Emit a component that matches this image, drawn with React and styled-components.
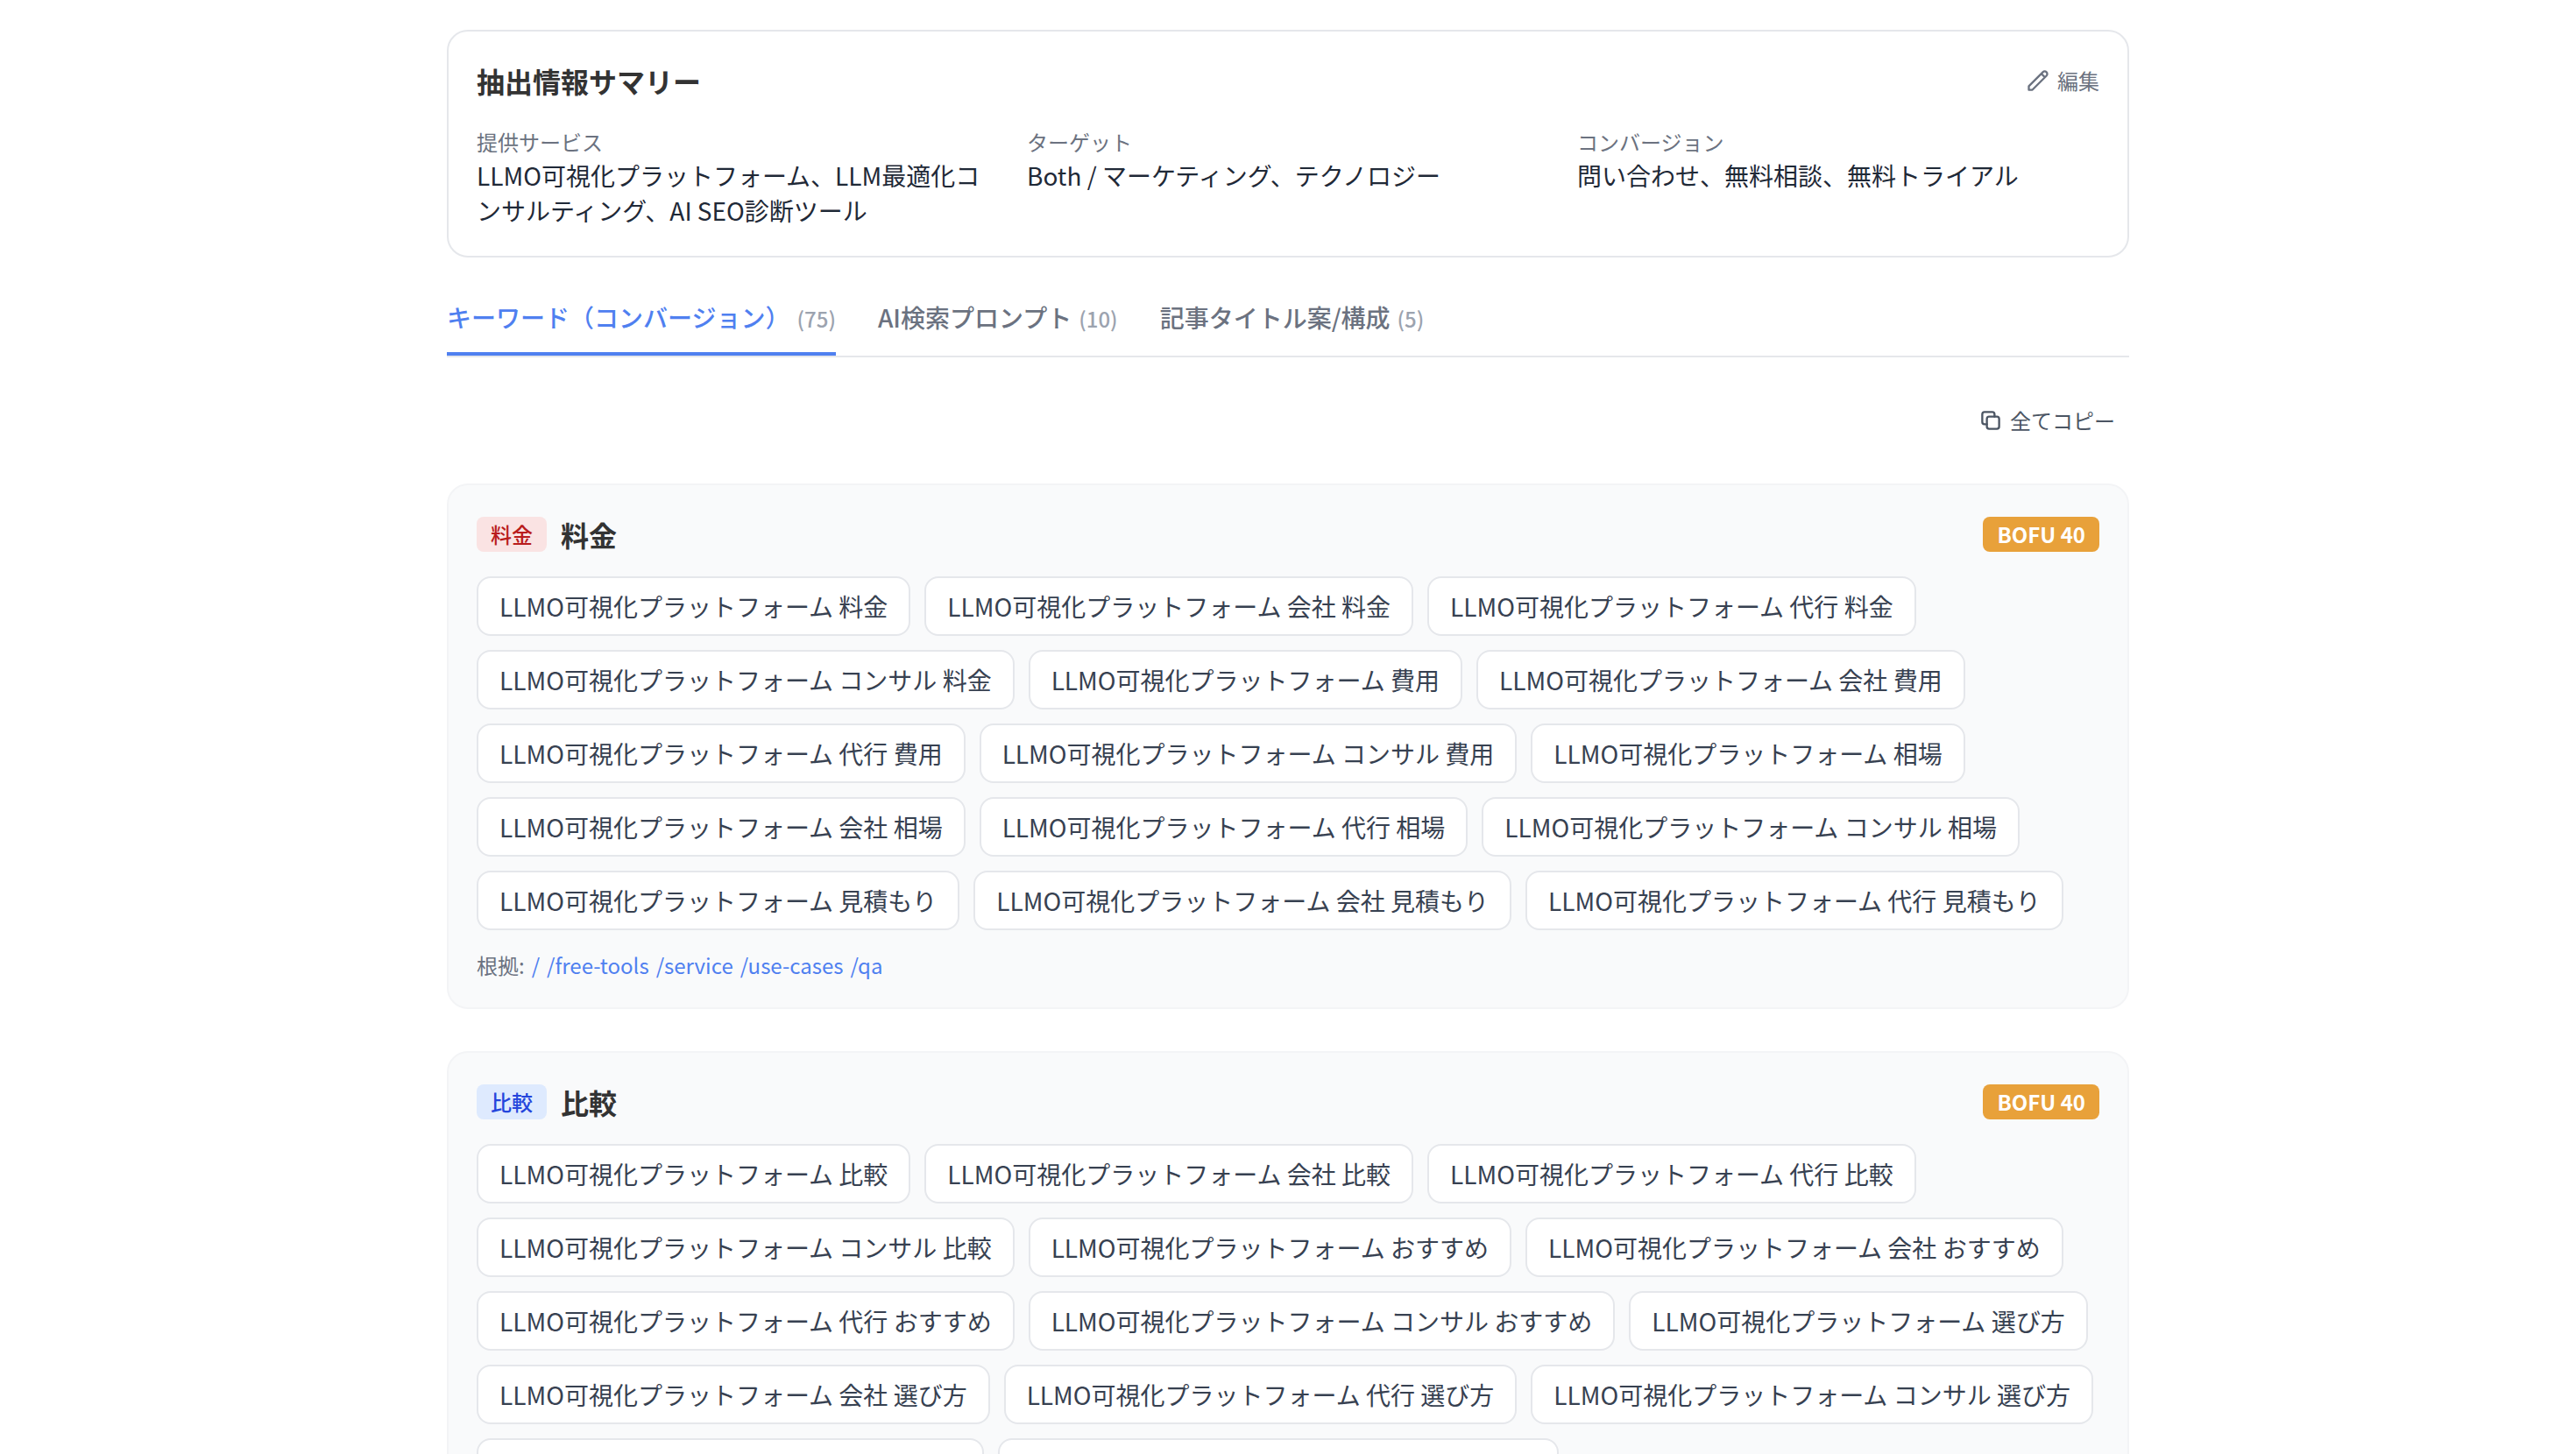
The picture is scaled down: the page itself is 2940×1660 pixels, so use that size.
import { useState } from "react";
import styled, { createGlobalStyle } from "styled-components";

const GlobalStyle = createGlobalStyle`
    * {
        box-sizing: border-box;
    }
    body {
        margin: 0;
        background: #ffffff;
        color: #333333;
        font-family: "Noto Sans CJK JP", "Noto Sans", sans-serif;
        font-size: 28px;
        line-height: 40px;
    }
    button {
        font-family: inherit;
        cursor: pointer;
    }
    h2, h3, p, ul, dl, dd {
        margin: 0;
        padding: 0;
    }
`;

const Page = styled.main`
    max-width: 1920px;
    margin: 0 auto;
    padding: 34px 0 48px;
`;

const SummaryCard = styled.section`
    padding: 32px;
    border: 2px solid #e5e7eb;
    border-radius: 24px;
    background: #ffffff;
`;

const CardHeader = styled.div`
    display: flex;
    align-items: center;
    justify-content: space-between;
    margin-bottom: 24px;
`;

const Heading = styled.h2`
    font-size: 32px;
    font-weight: 700;
    line-height: 48px;
`;

const TextButton = styled.button`
    display: inline-flex;
    align-items: center;
    gap: 8px;
    padding: ${(props) => props.$padding || "0"};
    border: 0;
    border-radius: 8px;
    background: none;
    color: ${(props) => props.$color};
    font-size: 24px;
    line-height: 32px;
`;

const Icon = styled.svg`
    width: 28px;
    height: 28px;
    fill: none;
    stroke: currentColor;
    stroke-width: 2;
    stroke-linecap: round;
    stroke-linejoin: round;
`;

const SummaryGrid = styled.dl`
    display: grid;
    grid-template-columns: repeat(3, 1fr);
    gap: 32px;
`;

const SummaryLabel = styled.dt`
    padding-top: 4px;
    color: #6b7280;
    font-size: 24px;
    line-height: 36px;
`;

const SummaryValue = styled.dd`
    color: #1f2937;
`;

const TabList = styled.div`
    display: flex;
    gap: 48px;
    margin-top: 48px;
    border-bottom: 2px solid #e5e7eb;
`;

const Tab = styled.button`
    padding: 0 0 18px;
    border: 0;
    border-bottom: 4px solid ${(props) => (props.$active ? "#4f80f0" : "transparent")};
    background: none;
    color: ${(props) => (props.$active ? "#4f80f0" : "#6b7280")};
    font-size: 28px;
    font-weight: 500;
    line-height: 40px;
`;

const TabCount = styled.span`
    margin-left: 8px;
    color: #9ca3af;
    font-size: 24px;
`;

const Toolbar = styled.div`
    display: flex;
    justify-content: flex-end;
    padding: 48px 0;
`;

const GroupList = styled.div`
    display: flex;
    flex-direction: column;
    gap: 48px;
`;

const GroupCard = styled.section`
    padding: 32px;
    border: 2px solid #f3f4f6;
    border-radius: 24px;
    background: #f9fafb;
`;

const GroupTitle = styled.div`
    display: flex;
    align-items: center;
    gap: 16px;
`;

const tones = {
    red: { background: "#fae3e3", color: "#b91c1c" },
    blue: { background: "#deeafe", color: "#2445dc" },
    amber: { background: "#e8a13a", color: "#ffffff" },
};

const Badge = styled.span`
    padding: 4px 16px;
    border-radius: 8px;
    background: ${(props) => tones[props.$tone].background};
    color: ${(props) => tones[props.$tone].color};
    font-size: 24px;
    font-weight: ${(props) => (props.$bold ? 700 : 500)};
    line-height: 32px;
`;

const ChipList = styled.ul`
    display: flex;
    flex-wrap: wrap;
    gap: 16px;
    list-style: none;
`;

const Chip = styled.li`
    padding: 12px 24px;
    border: 2px solid #e5e7eb;
    border-radius: 16px;
    background: #ffffff;
    color: #374151;
`;

const Sources = styled.p`
    display: flex;
    gap: 8px;
    margin-top: 24px;
    color: #6b7280;
    font-size: 24px;
    line-height: 32px;
`;

const SourceLink = styled.a`
    color: #4f80f0;
    text-decoration: none;
`;

const summary = [
    {
        label: "提供サービス",
        value: "LLMO可視化プラットフォーム、LLM最適化コンサルティング、AI SEO診断ツール",
    },
    { label: "ターゲット", value: "Both / マーケティング、テクノロジー" },
    { label: "コンバージョン", value: "問い合わせ、無料相談、無料トライアル" },
];

const tabs = [
    { id: "keywords", label: "キーワード（コンバージョン）", count: 75 },
    { id: "prompts", label: "AI検索プロンプト", count: 10 },
    { id: "articles", label: "記事タイトル案/構成", count: 5 },
];

const service = "LLMO可視化プラットフォーム";
const modifiers = ["", "会社 ", "代行 ", "コンサル "];
const sources = ["/", "/free-tools", "/service", "/use-cases", "/qa"];

// every group is capped at 15 keywords
const buildKeywords = (words) =>
    words
        .flatMap((word) => modifiers.map((modifier) => `${service} ${modifier}${word}`))
        .slice(0, 15);

const groups = [
    {
        name: "料金",
        tone: "red",
        score: "BOFU 40",
        keywords: buildKeywords(["料金", "費用", "相場", "見積もり"]),
    },
    {
        name: "比較",
        tone: "blue",
        score: "BOFU 40",
        keywords: buildKeywords(["比較", "おすすめ", "選び方", "ランキング"]),
    },
];

function PencilIcon() {
    return (
        <Icon viewBox="0 0 24 24" aria-hidden="true">
            <path d="M15.232 5.232l3.536 3.536m-2.036-5.036a2.5 2.5 0 113.536 3.536L6.5 21.036H3v-3.572L16.732 3.732z" />
        </Icon>
    );
}

function CopyIcon() {
    return (
        <Icon viewBox="0 0 24 24" aria-hidden="true">
            <rect x="8.25" y="8.25" width="12" height="12" rx="2.25" />
            <path d="M8.25 15.75H6A2.25 2.25 0 0 1 3.75 13.5V6A2.25 2.25 0 0 1 6 3.75h7.5A2.25 2.25 0 0 1 15.75 6v2.25" />
        </Icon>
    );
}

function KeywordGroup({ group }) {
    return (
        <GroupCard>
            <CardHeader>
                <GroupTitle>
                    <Badge $tone={group.tone}>{group.name}</Badge>
                    <Heading as="h3">{group.name}</Heading>
                </GroupTitle>
                <Badge $tone="amber" $bold>
                    {group.score}
                </Badge>
            </CardHeader>
            <ChipList>
                {group.keywords.map((keyword) => (
                    <Chip key={keyword}>{keyword}</Chip>
                ))}
            </ChipList>
            <Sources>
                <span>根拠:</span>
                {sources.map((path) => (
                    <SourceLink key={path} href={path}>
                        {path}
                    </SourceLink>
                ))}
            </Sources>
        </GroupCard>
    );
}

function App() {
    const [activeTab, setActiveTab] = useState("keywords");

    return (
        <Page lang="ja">
            <GlobalStyle />
            <SummaryCard>
                <CardHeader>
                    <Heading>抽出情報サマリー</Heading>
                    <TextButton type="button" $color="#6b7280">
                        <PencilIcon />
                        編集
                    </TextButton>
                </CardHeader>
                <SummaryGrid>
                    {summary.map((item) => (
                        <div key={item.label}>
                            <SummaryLabel>{item.label}</SummaryLabel>
                            <SummaryValue>{item.value}</SummaryValue>
                        </div>
                    ))}
                </SummaryGrid>
            </SummaryCard>

            <TabList role="tablist">
                {tabs.map((tab) => (
                    <Tab
                        key={tab.id}
                        type="button"
                        role="tab"
                        aria-selected={tab.id === activeTab}
                        $active={tab.id === activeTab}
                        onClick={() => setActiveTab(tab.id)}
                    >
                        {tab.label}
                        <TabCount>({tab.count})</TabCount>
                    </Tab>
                ))}
            </TabList>

            <Toolbar>
                <TextButton type="button" $color="#4b5563" $padding="8px 16px">
                    <CopyIcon />
                    全てコピー
                </TextButton>
            </Toolbar>

            <GroupList>
                {groups.map((group) => (
                    <KeywordGroup key={group.name} group={group} />
                ))}
            </GroupList>
        </Page>
    );
}

export default App;
